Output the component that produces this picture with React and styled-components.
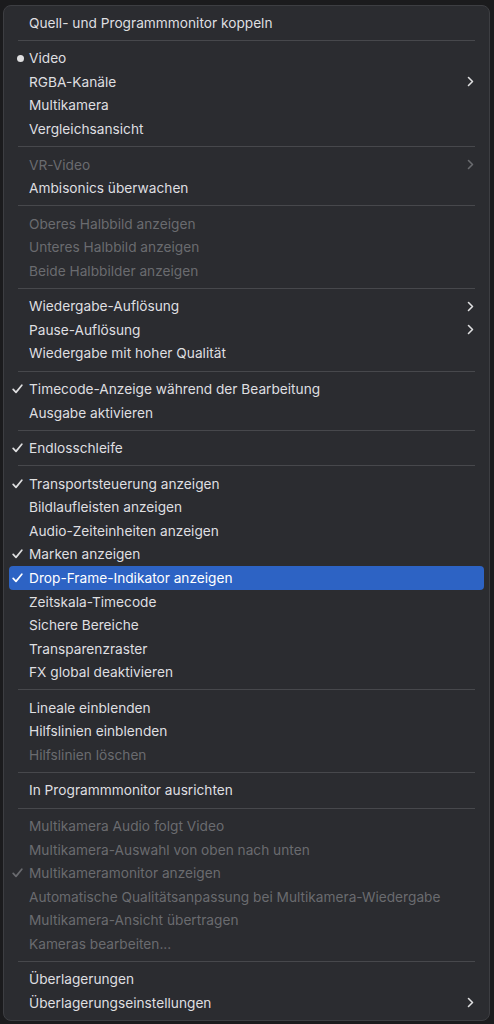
import React from 'react'
import styled, { createGlobalStyle } from 'styled-components'

const GlobalStyle = createGlobalStyle`
  html, body {
    margin: 0;
    padding: 0;
    background: #1b1b1d;
  }
`

// mark: 'check' | 'dot'; sub: submenu chevron; off: disabled
const entries = [
  { label: 'Quell- und Programmmonitor koppeln' },
  { sep: true },
  { label: 'Video', mark: 'dot' },
  { label: 'RGBA-Kanäle', sub: true },
  { label: 'Multikamera' },
  { label: 'Vergleichsansicht' },
  { sep: true },
  { label: 'VR-Video', sub: true, off: true },
  { label: 'Ambisonics überwachen' },
  { sep: true },
  { label: 'Oberes Halbbild anzeigen', off: true },
  { label: 'Unteres Halbbild anzeigen', off: true },
  { label: 'Beide Halbbilder anzeigen', off: true },
  { sep: true },
  { label: 'Wiedergabe-Auflösung', sub: true },
  { label: 'Pause-Auflösung', sub: true },
  { label: 'Wiedergabe mit hoher Qualität' },
  { sep: true },
  { label: 'Timecode-Anzeige während der Bearbeitung', mark: 'check' },
  { label: 'Ausgabe aktivieren' },
  { sep: true },
  { label: 'Endlosschleife', mark: 'check' },
  { sep: true },
  { label: 'Transportsteuerung anzeigen', mark: 'check' },
  { label: 'Bildlaufleisten anzeigen' },
  { label: 'Audio-Zeiteinheiten anzeigen' },
  { label: 'Marken anzeigen', mark: 'check' },
  { label: 'Drop-Frame-Indikator anzeigen', mark: 'check', active: true },
  { label: 'Zeitskala-Timecode' },
  { label: 'Sichere Bereiche' },
  { label: 'Transparenzraster' },
  { label: 'FX global deaktivieren' },
  { sep: true },
  { label: 'Lineale einblenden' },
  { label: 'Hilfslinien einblenden' },
  { label: 'Hilfslinien löschen', off: true },
  { sep: true },
  { label: 'In Programmmonitor ausrichten' },
  { sep: true },
  { label: 'Multikamera Audio folgt Video', off: true },
  { label: 'Multikamera-Auswahl von oben nach unten', off: true },
  { label: 'Multikameramonitor anzeigen', mark: 'check', off: true },
  { label: 'Automatische Qualitätsanpassung bei Multikamera-Wiedergabe', off: true },
  { label: 'Multikamera-Ansicht übertragen', off: true },
  { label: 'Kameras bearbeiten...', off: true },
  { sep: true },
  { label: 'Überlagerungen' },
  { label: 'Überlagerungseinstellungen', sub: true },
]

const Check = () => (
  <svg width="11" height="10" viewBox="0 0 11 10" fill="none">
    <path d="M1.2 5.4 L4 8.4 L9.8 1.2" stroke="currentColor" strokeWidth="1.7" strokeLinecap="round" strokeLinejoin="round" />
  </svg>
)

const Chevron = () => (
  <svg width="7" height="11" viewBox="0 0 7 11" fill="none">
    <path d="M1.5 1.5 L5.5 5.5 L1.5 9.5" stroke="currentColor" strokeWidth="1.6" strokeLinecap="round" strokeLinejoin="round" />
  </svg>
)

export default function App() {
  return (
    <Page>
      <GlobalStyle />
      <Menu>
        {entries.map((e, i) =>
          e.sep ? (
            <Separator key={i} />
          ) : (
            <Item key={i} $off={e.off} $active={e.active}>
              <Mark>
                {e.mark === 'check' && <Check />}
                {e.mark === 'dot' && <Dot />}
              </Mark>
              <Label>{e.label}</Label>
              <Arrow>{e.sub && <Chevron />}</Arrow>
            </Item>
          )
        )}
      </Menu>
    </Page>
  )
}

const Page = styled.div`
  min-height: 1024px;
  padding: 5px 4px 0 3px;
  box-sizing: border-box;
  background: #1b1b1d;
`

const Menu = styled.div`
  display: flex;
  flex-direction: column;
  background: #2b2c30;
  border: 1px solid #3d3e42;
  border-radius: 8px;
  padding: 5px 5px 5px;
  font-family: Inter, "Noto Sans", sans-serif;
  font-size: 13.7px;
`

const Item = styled.div`
  display: grid;
  grid-template-columns: 20px 1fr 17px;
  align-items: center;
  height: 23.6px;
  border-radius: 4px;
  color: ${p => (p.$active ? '#ffffff' : p.$off ? '#6a6b6f' : '#dfdfe0')};
  background: ${p => (p.$active ? '#2d63c4' : 'transparent')};
`

const Mark = styled.span`
  display: flex;
  align-items: center;
  justify-content: flex-end;
  padding-right: 6px;
`

const Dot = styled.span`
  width: 7px;
  height: 7px;
  border-radius: 50%;
  background: currentColor;
  margin-right: -1px;
`

const Label = styled.span`
  white-space: nowrap;
`

const Arrow = styled.span`
  display: flex;
  align-items: center;
  justify-content: flex-start;
`

const Separator = styled.div`
  height: 1px;
  margin: 5.4px 9px 5.5px;
  background: #47484c;
`
